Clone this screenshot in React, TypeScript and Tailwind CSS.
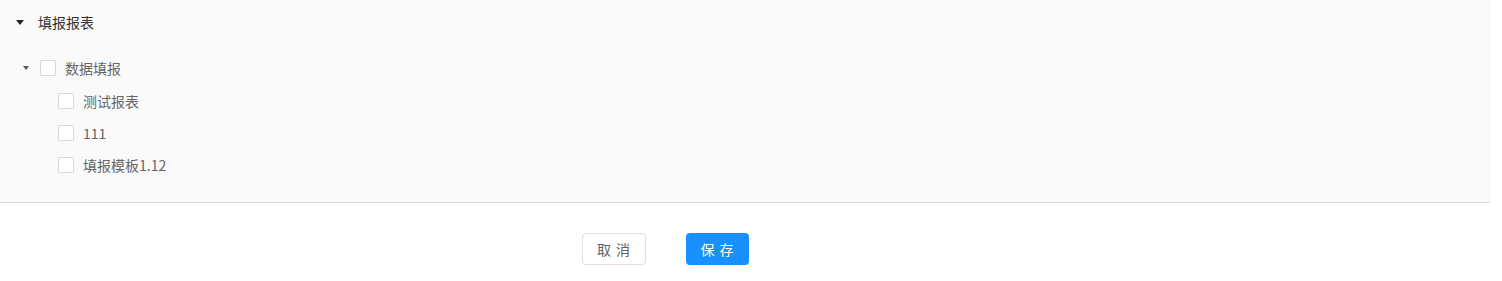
import React from "react";

const font = { fontFamily: '"Noto Sans CJK SC", "Noto Sans", sans-serif' };

function Box() {
  return <span className="block w-4 h-4 shrink-0 rounded-[2px] border border-[#d9d9d9] bg-white" />;
}

function Child({ label }: { label: string }) {
  return (
    <div className="flex items-center h-8 pl-[58px]">
      <Box />
      <span className="ml-[9px] text-[14px] text-[#666666] leading-none">{label}</span>
    </div>
  );
}

export default function App() {
  return (
    <div className="w-[1502px] h-[281px] bg-white" style={font}>
      <div className="w-[1491px] h-[203px] bg-[#fafafa] border-b border-[#d9d9d9]">
        <div className="flex items-center h-[44px] pl-4">
          <svg width="8" height="5" viewBox="0 0 8 5" className="block">
            <path d="M0 0 L8 0 L4 5 Z" fill="#262626" />
          </svg>
          <span className="ml-[14px] text-[14px] text-[#333333] leading-none">填报报表</span>
        </div>
        <div className="mt-[8px]">
          <div className="flex items-center h-8 pl-[23px]">
            <svg width="6" height="4" viewBox="0 0 6 4" className="block">
              <path d="M0 0 L6 0 L3 4 Z" fill="#595959" />
            </svg>
            <span className="ml-[11px]"><Box /></span>
            <span className="ml-[9px] text-[14px] text-[#666666] leading-none">数据填报</span>
          </div>
          <div className="mt-px">
            <Child label="测试报表" />
            <Child label="111" />
            <Child label="填报模板1.12" />
          </div>
        </div>
      </div>
      <div className="flex pt-[30px] pl-[582px] gap-[40px]">
        <button className="w-16 h-8 rounded border border-[#dcdfe6] bg-white text-[14px] text-[#606266] whitespace-pre tracking-[1px]">取 消</button>
        <button className="w-[63px] h-8 rounded bg-[#1890ff] text-[14px] text-white whitespace-pre tracking-[1px]">保 存</button>
      </div>
    </div>
  );
}
